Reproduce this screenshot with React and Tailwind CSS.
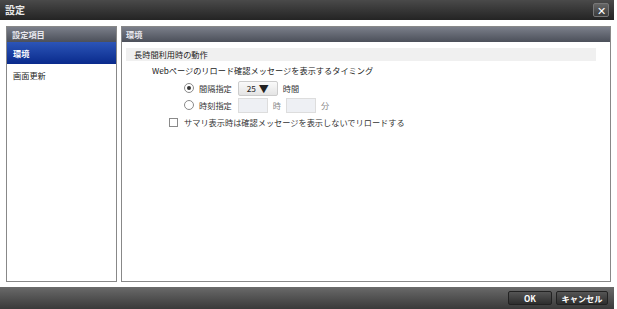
import React from 'react';

const font = { fontFamily: '"Noto Sans CJK JP", "Noto Sans", sans-serif' };

function Radio({ checked }) {
    return (
        <span className="w-[10px] h-[10px] shrink-0 rounded-full border border-[#8a8a8a] bg-white flex items-center justify-center">
            {checked && <span className="w-[4px] h-[4px] rounded-full bg-[#333]" />}
        </span>
    );
}

function App() {
    return (
        <div className="w-[617px] h-[309px] bg-white text-[8.2px] text-[#333] flex flex-col whitespace-nowrap" style={font}>
            {/* title bar */}
            <div className="h-[20px] w-[614px] bg-gradient-to-b from-[#4a4a4a] to-[#242424] flex items-center justify-between pl-[5px] pr-[5px]">
                <span className="text-[10px] font-bold text-[#e8e8e8] leading-none">設定</span>
                <span className="w-[16px] h-[14px] rounded-[2px] border border-[#777] bg-gradient-to-b from-[#666] to-[#3a3a3a] text-white text-[11px] leading-none flex items-center justify-center">✕</span>
            </div>

            <div className="flex-1 w-[614px] bg-white flex gap-[4px] pl-[6px] pr-[3px] pt-[6px] pb-[5px]">
                {/* left panel */}
                <div className="w-[111px] border border-[#888] flex flex-col">
                    <div className="h-[15px] bg-gradient-to-b from-[#7b7f8a] to-[#4c505a] text-[#e8e8ee] font-bold flex items-center px-[5px]">設定項目</div>
                    <div className="h-[22px] bg-gradient-to-b from-[#2c55b8] to-[#0a2a8c] text-white font-bold flex items-center px-[6px]">環境</div>
                    <div className="h-[22px] flex items-center px-[6px] text-[#222]">画面更新</div>
                </div>

                {/* right panel */}
                <div className="flex-1 border border-[#888] flex flex-col">
                    <div className="h-[15px] bg-gradient-to-b from-[#7b7f8a] to-[#4c505a] text-[#e8e8ee] font-bold flex items-center px-[4px]">環境</div>
                    <div className="pt-[6px] pl-[4px] pr-[14px]">
                        <div className="h-[13px] bg-[#f0f0f0] flex items-center pl-[8px] text-[#222]">長時間利用時の動作</div>
                        <div className="pl-[26px] pt-[3px] text-[#222] leading-[12px]">Webページのリロード確認メッセージを表示するタイミング</div>
                        <div className="pl-[58px] pt-[4px] flex items-center gap-[5px] h-[16px] box-content">
                            <Radio checked />
                            <span className="mr-[1px]">間隔指定</span>
                            <span className="w-[40px] h-[15px] rounded-[2px] border border-[#ccc] bg-gradient-to-b from-[#fafafa] to-[#e4e4e4] flex items-center justify-center gap-[3px] text-[#222]">25 <span className="text-[10px]">▼</span></span>
                            <span>時間</span>
                        </div>
                        <div className="pl-[58px] pt-[1px] flex items-center gap-[5px] h-[16px] box-content">
                            <Radio />
                            <span className="mr-[1px]">時刻指定</span>
                            <span className="w-[30px] h-[15px] border border-[#ddd] bg-[#eef0f4]" />
                            <span className="text-[#888]">時</span>
                            <span className="w-[30px] h-[15px] border border-[#ddd] bg-[#eef0f4]" />
                            <span className="text-[#888]">分</span>
                        </div>
                        <div className="pl-[43px] pt-[3px] flex items-center gap-[6px]">
                            <span className="w-[9px] h-[9px] border border-[#8a8a8a] bg-white" />
                            <span>サマリ表示時は確認メッセージを表示しないでリロードする</span>
                        </div>
                    </div>
                </div>
            </div>

            {/* footer */}
            <div className="h-[22px] w-[614px] bg-gradient-to-b from-[#6a6a6a] to-[#3a3a3a] flex items-center justify-end gap-[4px] pr-[6px]">
                <span className="w-[44px] h-[14px] rounded-[2px] border border-[#222] bg-gradient-to-b from-[#555] to-[#2e2e2e] text-white font-bold flex items-center justify-center">OK</span>
                <span className="w-[52px] h-[14px] rounded-[2px] border border-[#222] bg-gradient-to-b from-[#555] to-[#2e2e2e] text-white font-bold flex items-center justify-center">キャンセル</span>
            </div>
        </div>
    );
}

export default App;
